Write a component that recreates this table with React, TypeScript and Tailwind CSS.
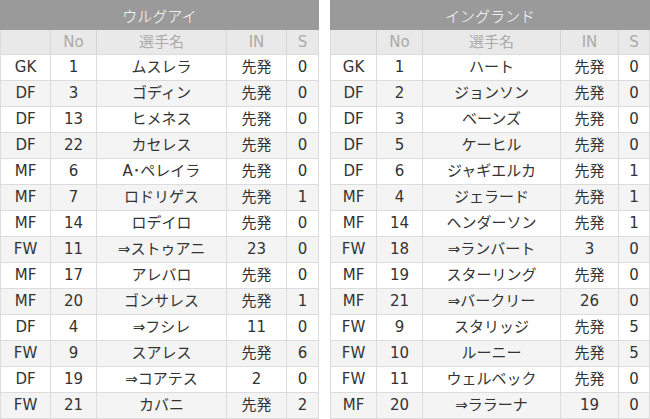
import React from "react";

type Row = [string, string, string, string, string];

const left: Row[] = [
  ["GK", "1", "ムスレラ", "先発", "0"],
  ["DF", "3", "ゴディン", "先発", "0"],
  ["DF", "13", "ヒメネス", "先発", "0"],
  ["DF", "22", "カセレス", "先発", "0"],
  ["MF", "6", "A･ペレイラ", "先発", "0"],
  ["MF", "7", "ロドリゲス", "先発", "1"],
  ["MF", "14", "ロデイロ", "先発", "0"],
  ["FW", "11", "⇒ストゥアニ", "23", "0"],
  ["MF", "17", "アレバロ", "先発", "0"],
  ["MF", "20", "ゴンサレス", "先発", "1"],
  ["DF", "4", "⇒フシレ", "11", "0"],
  ["FW", "9", "スアレス", "先発", "6"],
  ["DF", "19", "⇒コアテス", "2", "0"],
  ["FW", "21", "カバニ", "先発", "2"],
];

const right: Row[] = [
  ["GK", "1", "ハート", "先発", "0"],
  ["DF", "2", "ジョンソン", "先発", "0"],
  ["DF", "3", "ベーンズ", "先発", "0"],
  ["DF", "5", "ケーヒル", "先発", "0"],
  ["DF", "6", "ジャギエルカ", "先発", "1"],
  ["MF", "4", "ジェラード", "先発", "1"],
  ["MF", "14", "ヘンダーソン", "先発", "1"],
  ["FW", "18", "⇒ランバート", "3", "0"],
  ["MF", "19", "スターリング", "先発", "0"],
  ["MF", "21", "⇒バークリー", "26", "0"],
  ["FW", "9", "スタリッジ", "先発", "5"],
  ["FW", "10", "ルーニー", "先発", "5"],
  ["FW", "11", "ウェルベック", "先発", "0"],
  ["MF", "20", "⇒ララーナ", "19", "0"],
];

function Table({
  title,
  rows,
  width,
  cols,
}: {
  title: string;
  rows: Row[];
  width: string;
  cols: string;
}) {
  const header: Row = ["", "No", "選手名", "IN", "S"];
  return (
    <div className={`${width} flex flex-col`}>
      <div
        className="h-[30px] bg-[#9a9a9a] text-white text-[15px] font-light flex items-center justify-center"
        style={{ fontFamily: '"Noto Sans CJK JP", sans-serif' }}
      >
        {title}
      </div>
      <div className="border-l border-r border-[#dcdcdc]">
        <div className={`grid ${cols} h-[25px] bg-[#e9e9e9] border-b border-[#dcdcdc] text-[#ababab]`}>
          {header.map((c, i) => (
            <div
              key={i}
              className={`flex items-center justify-center ${i < 4 ? "border-r border-[#d6d6d6]" : ""}`}
            >
              {c}
            </div>
          ))}
        </div>
        {rows.map((r, ri) => (
          <div
            key={ri}
            className={`grid ${cols} h-[26px] border-b border-[#dcdcdc] text-[#333] ${ri % 2 === 1 ? "bg-[#f4f4f4]" : "bg-white"}`}
          >
            {r.map((c, i) => (
              <div
                key={i}
                className={`flex items-center justify-center whitespace-nowrap ${i < 4 ? "border-r border-[#dcdcdc]" : ""}`}
              >
                {c}
              </div>
            ))}
          </div>
        ))}
      </div>
    </div>
  );
}

export default function App() {
  return (
    <div
      className="w-[650px] h-[419px] flex justify-between bg-white text-[15px] leading-none overflow-hidden"
      style={{ fontFamily: '"DejaVu Sans", "Noto Sans CJK JP", sans-serif' }}
    >
      <Table
        title="ウルグアイ"
        rows={left}
        width="w-[319px]"
        cols="grid-cols-[50px_46px_130px_60px_1fr]"
      />
      <Table
        title="イングランド"
        rows={right}
        width="w-[320px]"
        cols="grid-cols-[46px_46px_138px_58px_1fr]"
      />
    </div>
  );
}
